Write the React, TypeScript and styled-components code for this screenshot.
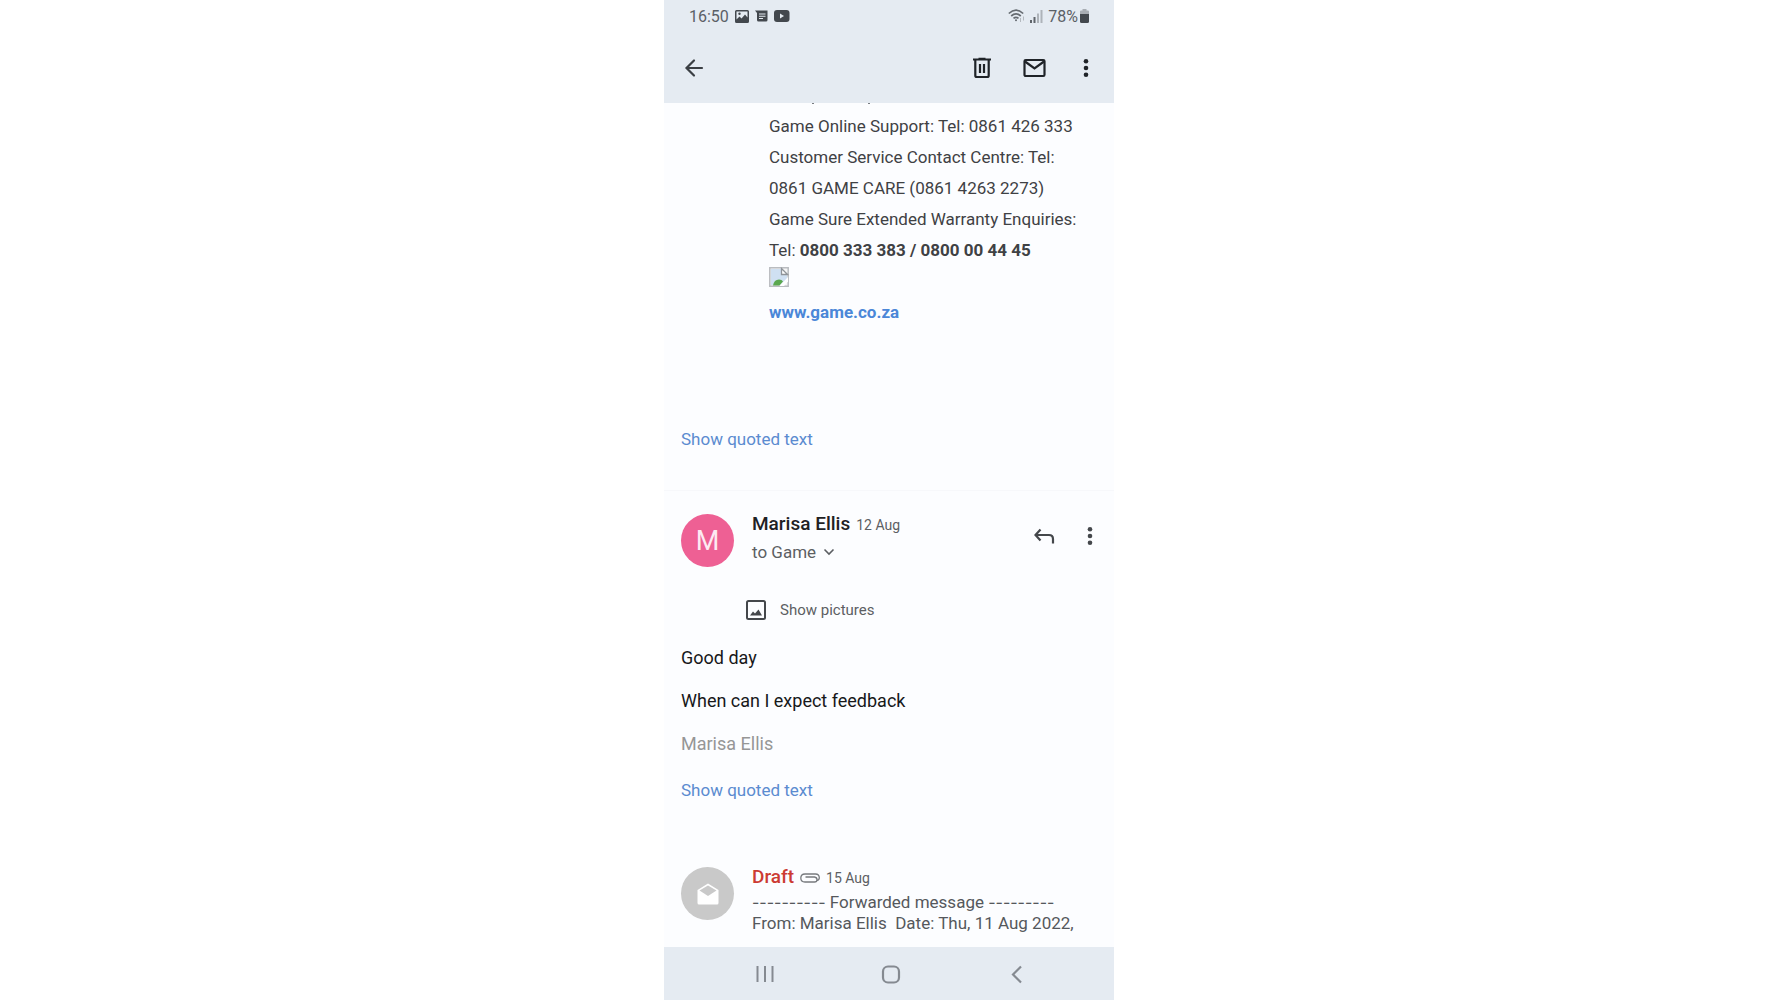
import React from "react";
import styled, { createGlobalStyle } from "styled-components";

const GlobalStyle = createGlobalStyle`
  * { box-sizing: border-box; }
  body { margin: 0; background: #ffffff; font-family: Roboto, "Liberation Sans", sans-serif; }
  p, h2 { margin: 0; }
  svg { display: block; flex: none; }
`;

const Screen = styled.div`
  display: flex;
  flex-direction: column;
  width: 100%;
  max-width: 450px;
  min-height: 100vh;
  margin: 0 auto;
  background: #fcfdff;
`;

const Header = styled.header`
  background: #e5ebf2;
`;

const StatusBar = styled.div`
  display: flex;
  align-items: center;
  justify-content: space-between;
  height: 32px;
  padding: 0 25px;
  color: #5b6066;
  font-size: 16px;
`;

const StatusGroup = styled.div<{ $gap: number }>`
  display: flex;
  align-items: center;
  gap: ${(p) => p.$gap}px;
`;

const Toolbar = styled.div`
  display: flex;
  align-items: center;
  justify-content: space-between;
  height: 71px;
  padding: 0 16px 0 18px;
`;

const Actions = styled.div<{ $gap: number }>`
  display: flex;
  align-items: center;
  gap: ${(p) => p.$gap}px;
`;

const IconButton = styled.button<{ $color?: string }>`
  display: flex;
  padding: 0;
  border: 0;
  background: none;
  color: ${(p) => p.$color ?? "#1f2328"};
  cursor: pointer;
`;

const Thread = styled.main`
  flex: 1;
  display: flex;
  flex-direction: column;
`;

const Signature = styled.address`
  padding: 0 17px 0 105px;
  color: #3f4144;
  font-size: 17px;
  font-style: normal;
  line-height: 31px;
`;

const MissingImage = styled.div`
  height: 31px;
  padding-top: 1px;
`;

const SiteLink = styled.a`
  color: #4b87d8;
  font-weight: 700;
  text-decoration: none;
`;

const QuotedToggle = styled.button`
  align-self: flex-start;
  padding: 0;
  border: 0;
  background: none;
  color: #5b8bd0;
  font: 17px/24px Roboto, "Liberation Sans", sans-serif;
  cursor: pointer;
`;

const Earlier = styled.section`
  display: flex;
  flex-direction: column;
  gap: 99px;
  padding-bottom: 39px;
  border-bottom: 1px solid #f7f8fb;

  > ${QuotedToggle} { margin-left: 17px; }
`;

const Message = styled.article`
  display: flex;
  flex-direction: column;
  padding: 22px 12px 0 17px;
`;

const MessageHead = styled.div`
  display: flex;
  gap: 18px;
`;

const Avatar = styled.div<{ $bg: string }>`
  display: flex;
  flex: none;
  align-items: center;
  justify-content: center;
  width: 53px;
  height: 53px;
  margin-top: 1px;
  border-radius: 50%;
  background: ${(p) => p.$bg};
  color: #fdeaf2;
  font-size: 27px;
`;

const Sender = styled.div`
  flex: 1;
  min-width: 0;
`;

const NameRow = styled.div`
  display: flex;
  align-items: baseline;
  gap: 6px;
  line-height: 22px;
`;

const Name = styled.h2<{ $draft?: boolean }>`
  color: ${(p) => (p.$draft ? "#cc3b33" : "#1f2124")};
  font-size: 19px;
  font-weight: 500;
`;

const DateText = styled.time`
  color: #5c5f63;
  font-size: 14px;
`;

const Recipient = styled.button`
  display: flex;
  align-items: center;
  gap: 7px;
  margin-top: 4px;
  padding: 0;
  border: 0;
  background: none;
  color: #5c5f63;
  font: 17px/24px Roboto, "Liberation Sans", sans-serif;
  cursor: pointer;
`;

const HeadActions = styled(Actions)`
  align-self: flex-start;
  padding-top: 10px;
`;

const PicturesButton = styled.button`
  display: flex;
  align-items: center;
  align-self: flex-start;
  gap: 13px;
  margin: 31px 0 0 64px;
  padding: 0;
  border: 0;
  background: none;
  color: #5c5f63;
  font: 15px/24px Roboto, "Liberation Sans", sans-serif;
  cursor: pointer;
`;

const Body = styled.div`
  display: flex;
  flex-direction: column;
  gap: 19px;
  margin: 24px 0 22px;
  color: #17181a;
  font-size: 18px;
  line-height: 24px;
`;

const Signoff = styled.p`
  color: #969696;
`;

const Draft = styled(Message)`
  padding-top: 64px;
`;

const Preview = styled.p`
  margin-top: 3px;
  color: #55585c;
  font-size: 17px;
  line-height: 21px;
  white-space: pre;
`;

const Dashes = styled.span`
  font-family: Inter, "Liberation Sans", sans-serif;
  font-size: 16px;
  line-height: 1;
`;

const NavBar = styled.nav`
  display: flex;
  align-items: center;
  justify-content: space-between;
  height: 53px;
  padding: 0 85px 0 89px;
  background: #e5ebf2;
`;

const Dots = () => (
  <svg width="24" height="26" viewBox="0 0 24 26" fill="currentColor">
    <circle cx="12" cy="6.2" r="2.300" />
    <circle cx="12" cy="13" r="2.300" />
    <circle cx="12" cy="19.8" r="2.300" />
  </svg>
);

export default function App() {
  return (
    <>
      <GlobalStyle />
      <Screen>
        <Header>
          <StatusBar>
            <StatusGroup $gap={6}>
              <span>16:50</span>
              <svg width="14" height="13" viewBox="0 0 14 13">
                <path fill="#43484e" fillRule="evenodd" d="M1.5 0h11Q14 0 14 1.500v10Q14 13 12.500 13h-11Q0 13 0 11.500v-10Q0 0 1.500 0zM1.500 1.500v8l3-3 2 2 3.500-4 2.500 3v-6z" />
                <circle cx="4.500" cy="3.800" r="1.200" fill="#43484e" />
              </svg>
              <svg width="13" height="12" viewBox="0 0 13 12">
                <path fill="#43484e" fillRule="evenodd" d="M0 .5h12.500V10q0 1.500-1.500 1.500H3.500Q2 11.500 2 10V3zM4 3.500v1h6.500v-1zM4 5.800v1h6.500v-1zM4 8.100v1h4v-1z" />
              </svg>
              <svg width="16" height="12" viewBox="0 0 16 12">
                <rect width="15.500" height="12" rx="3" fill="#43484e" />
                <path d="M6 3.500v5l4-2.500z" fill="#e5ebf2" />
              </svg>
            </StatusGroup>
            <StatusGroup $gap={5}>
              <svg width="17" height="14" viewBox="0 0 17 14" fill="none" stroke="#666b71" strokeWidth="1.700">
                <path d="M.8 4.500Q8-2.300 15.200 4.500M3.200 7Q8 2.600 12.800 7M5.500 9.400Q8 7.200 10.500 9.400" />
                <circle cx="8" cy="11.200" r="1" fill="#666b71" stroke="none" />
                <path d="M12.500 9v4M15.500 7.500v4" stroke="#b4b9bf" strokeWidth="1" />
              </svg>
              <svg width="13" height="13" viewBox="0 0 13 13">
                <path d="M0 10h2v3H0zM3.500 7h2v6h-2z" fill="#60656b" />
                <path d="M7 3.500h2V13H7zM10.500 0h2v13h-2z" fill="#aeb3b9" />
              </svg>
              <StatusGroup $gap={2}>
                <span>78%</span>
                <svg width="9" height="14" viewBox="0 0 9 14">
                  <path d="M2.500 0h4v1.500H8q1 0 1 1V5H0V2.500q0-1 1-1h1.500z" fill="#a8adb3" />
                  <path d="M0 5h9v7.500q0 1.500-1.500 1.500h-6Q0 14 0 12.500z" fill="#43484e" />
                </svg>
              </StatusGroup>
            </StatusGroup>
          </StatusBar>
          <Toolbar>
            <IconButton aria-label="Back" $color="#3b3f44">
              <svg width="24" height="24" viewBox="0 0 24 24" fill="none" stroke="currentColor" strokeWidth="2.200" strokeLinecap="round">
                <path d="M20 12H4.500M12 4.500L4.500 12l7.500 7.500" />
              </svg>
            </IconButton>
            <Actions $gap={28}>
              <IconButton aria-label="Delete">
                <svg width="24" height="24" viewBox="0 0 24 24" fill="none" stroke="currentColor" strokeWidth="2.200">
                  <path d="M3 3.500h18M8.500 2.800h7M5.300 4v15.500q0 1.500 1.500 1.500h10.400q1.500 0 1.500-1.500V4M10 8v9M14 8v9" />
                </svg>
              </IconButton>
              <IconButton aria-label="Mark as unread">
                <svg width="24" height="24" viewBox="0 0 24 24" fill="none" stroke="currentColor" strokeWidth="2.200">
                  <rect x="2.500" y="4" width="20" height="16" rx="1.200" />
                  <path d="M3 5.500L12.500 12.500l9.500-7" />
                </svg>
              </IconButton>
              <IconButton aria-label="More options">
                <Dots />
              </IconButton>
            </Actions>
          </Toolbar>
        </Header>

        <Thread>
          <Earlier>
            <Signature>
              <svg width="120" height="8" viewBox="0 0 120 8" fill="#777b80">
                <rect x="43" width="2" height="1" />
                <rect x="99" width="2" height="1" />
              </svg>
              <p>
                Game Online Support: Tel: 0861 426 333
                <br />
                Customer Service Contact Centre: Tel:
                <br />
                0861 GAME CARE (0861 4263 2273)
                <br />
                Game Sure Extended Warranty Enquiries:
                <br />
                Tel: <strong>0800 333 383 / 0800 00 44 45</strong>
              </p>
              <MissingImage>
                <svg width="20" height="20" viewBox="0 0 20 20">
                  <path d="M.8.800h18.400v18.400H.8z" fill="#f4f5f6" stroke="#b9bcc0" strokeWidth="1.500" />
                  <path d="M2 2h11l5 5v5l-7 6H2z" fill="#cfe0f2" />
                  <path d="M12.500 1.500v6h6z" fill="#fff" stroke="#8f9499" strokeWidth="1.300" />
                  <path d="M4 18.500q1-6 6-6 3 0 4 2l-3.500 4z" fill="#5aa84f" />
                  <path d="M10.500 19L19 10v4.500L15 19z" fill="#fff" />
                </svg>
              </MissingImage>
              <SiteLink href="#site">www.game.co.za</SiteLink>
            </Signature>
            <QuotedToggle>Show quoted text</QuotedToggle>
          </Earlier>

          <Message>
            <MessageHead>
              <Avatar $bg="#ee6094">M</Avatar>
              <Sender>
                <NameRow>
                  <Name>Marisa Ellis</Name>
                  <DateText>12 Aug</DateText>
                </NameRow>
                <Recipient>
                  to Game
                  <svg width="12" height="12" viewBox="0 0 12 12" fill="none" stroke="currentColor" strokeWidth="1.600">
                    <path d="M1.500 3.500L6 8l4.500-4.500" />
                  </svg>
                </Recipient>
              </Sender>
              <HeadActions $gap={22}>
                <IconButton aria-label="Reply" $color="#44474b">
                  <svg width="24" height="24" viewBox="0 0 24 24" fill="none" stroke="currentColor" strokeWidth="2.200">
                    <path d="M8.500 5.500L3.500 11l5 5.500M3.500 11H17q4 0 4 4v4.500" />
                  </svg>
                </IconButton>
                <IconButton aria-label="Message options" $color="#44474b">
                  <Dots />
                </IconButton>
              </HeadActions>
            </MessageHead>
            <PicturesButton>
              <svg width="22" height="22" viewBox="0 0 22 22">
                <rect x="2" y="2" width="18" height="18" rx="1.500" fill="none" stroke="#44474b" strokeWidth="2" />
                <path d="M5 16.500l3-4 2 2 3.500-4 3.500 6z" fill="#44474b" />
              </svg>
              Show pictures
            </PicturesButton>
            <Body>
              <p>Good day</p>
              <p>When can I expect feedback</p>
              <Signoff>Marisa Ellis</Signoff>
            </Body>
            <QuotedToggle>Show quoted text</QuotedToggle>
          </Message>

          <Draft>
            <MessageHead>
              <Avatar $bg="#c9c9c9">
                <svg width="24" height="22" viewBox="0 0 24 22">
                  <path d="M12 .5L22.500 7v13q0 1.500-1.500 1.500H3q-1.500 0-1.500-1.500V7z" fill="#fff" />
                  <path d="M3.500 7.500L12 2.500l8.500 5L12 13z" fill="#c9c9c9" />
                </svg>
              </Avatar>
              <Sender>
                <NameRow>
                  <Name $draft>Draft</Name>
                  <svg width="20" height="10" viewBox="0 0 20 10" fill="none" stroke="#777a7e" strokeWidth="1.300">
                    <path d="M17 7.500q2.300-.3 2.300-2.700Q19.300 1 15.500 1H5Q.8 1 .8 5T5 9h9.500q2.500 0 2.500-2.300T14.500 4H5.500" />
                  </svg>
                  <DateText>15 Aug</DateText>
                </NameRow>
                <Preview>
                  <Dashes>----------</Dashes>
                  {" Forwarded message "}
                  <Dashes>---------</Dashes>
                  {"\nFrom: Marisa Ellis  Date: Thu, 11 Aug 2022,"}
                </Preview>
              </Sender>
            </MessageHead>
          </Draft>
        </Thread>

        <NavBar>
          <IconButton aria-label="Recent apps" $color="#858a91">
            <svg width="24" height="24" viewBox="0 0 24 24" stroke="currentColor" strokeWidth="2">
              <path d="M4.500 4v16M12 4v16M19.500 4v16" />
            </svg>
          </IconButton>
          <IconButton aria-label="Home" $color="#858a91">
            <svg width="24" height="24" viewBox="0 0 24 24" fill="none" stroke="currentColor" strokeWidth="2.200">
              <rect x="4" y="4.500" width="16" height="16" rx="5" />
            </svg>
          </IconButton>
          <IconButton aria-label="Go back" $color="#858a91">
            <svg width="24" height="24" viewBox="0 0 24 24" fill="none" stroke="currentColor" strokeWidth="2.200">
              <path d="M16 4.500l-8 8 8 8" />
            </svg>
          </IconButton>
        </NavBar>
      </Screen>
    </>
  );
}
